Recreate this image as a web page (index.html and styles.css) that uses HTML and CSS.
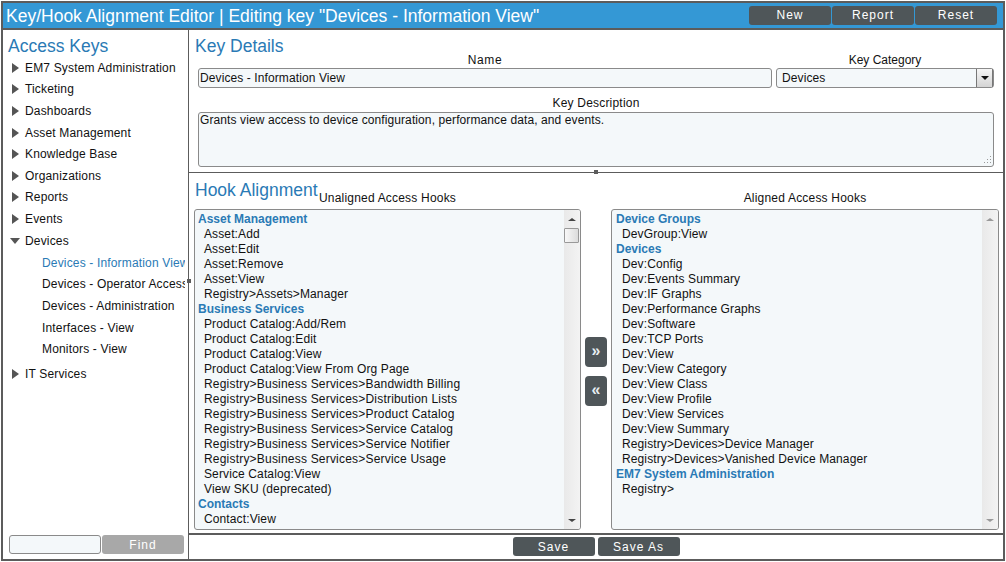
FILE: index.html
```html
<!DOCTYPE html>
<html lang="en">
<head>
<meta charset="utf-8">
<title>Key/Hook Alignment Editor</title>
<link rel="stylesheet" href="styles.css">
</head>
<body>
<div class="app">
  <header class="titlebar">
    <h1>Key/Hook Alignment Editor | Editing key "Devices - Information View"</h1>
    <div class="top-actions">
      <button class="btn top">New</button>
      <button class="btn top">Report</button>
      <button class="btn top">Reset</button>
    </div>
  </header>
  <div class="body">
    <aside class="sidebar">
      <h2 class="side-title">Access Keys</h2>
      <ul class="tree">
        <li class="node"><span class="tri"></span>EM7 System Administration</li>
        <li class="node"><span class="tri"></span>Ticketing</li>
        <li class="node"><span class="tri"></span>Dashboards</li>
        <li class="node"><span class="tri"></span>Asset Management</li>
        <li class="node"><span class="tri"></span>Knowledge Base</li>
        <li class="node"><span class="tri"></span>Organizations</li>
        <li class="node"><span class="tri"></span>Reports</li>
        <li class="node"><span class="tri"></span>Events</li>
        <li class="node expanded"><span class="tri open"></span>Devices</li>
        <li class="leaf active">Devices - Information View</li>
        <li class="leaf">Devices - Operator Access</li>
        <li class="leaf">Devices - Administration</li>
        <li class="leaf">Interfaces - View</li>
        <li class="leaf">Monitors - View</li>
        <li class="node last"><span class="tri"></span>IT Services</li>
      </ul>
      <div class="find">
        <input class="find-input" type="text" aria-label="Find">
        <button class="btn find-btn">Find</button>
      </div>
      <span class="grip side-grip"></span>
    </aside>
    <main class="main">
      <section class="details">
        <h2 class="section-title">Key Details</h2>
        <div class="detail-row">
          <div class="field name-field">
            <label class="label name-label">Name</label>
            <div class="box input">Devices - Information View</div>
          </div>
          <div class="field cat-field">
            <label class="label cat-label">Key Category</label>
            <div class="box input select">Devices<span class="drop"><i class="down black"></i></span></div>
          </div>
        </div>
        <label class="label desc-label">Key Description</label>
        <div class="box textarea">Grants view access to device configuration, performance data, and events.
          <svg class="resize" width="10" height="10" viewBox="0 0 10 10"><path d="M8 1h1v1H8zM5 4h1v1H5zM8 4h1v1H8zM2 7h1v1H2zM5 7h1v1H5zM8 7h1v1H8z" fill="#999"/></svg>
        </div>
        <span class="grip mid-grip"></span>
      </section>
      <section class="hooks">
        <h2 class="section-title hook-title">Hook Alignment</h2>
        <div class="hook-grid">
          <div class="label list-label">Unaligned Access Hooks</div>
          <div></div>
          <div class="label list-label">Aligned Access Hooks</div>
          <div class="list">
            <div class="items">
              <div class="group">Asset Management</div>
              <div class="item">Asset:Add</div>
              <div class="item">Asset:Edit</div>
              <div class="item">Asset:Remove</div>
              <div class="item">Asset:View</div>
              <div class="item">Registry&gt;Assets&gt;Manager</div>
              <div class="group">Business Services</div>
              <div class="item">Product Catalog:Add/Rem</div>
              <div class="item">Product Catalog:Edit</div>
              <div class="item">Product Catalog:View</div>
              <div class="item">Product Catalog:View From Org Page</div>
              <div class="item wide">Registry&gt;Business Services&gt;Bandwidth Billing</div>
              <div class="item wide">Registry&gt;Business Services&gt;Distribution Lists</div>
              <div class="item wide">Registry&gt;Business Services&gt;Product Catalog</div>
              <div class="item wide">Registry&gt;Business Services&gt;Service Catalog</div>
              <div class="item wide">Registry&gt;Business Services&gt;Service Notifier</div>
              <div class="item wide">Registry&gt;Business Services&gt;Service Usage</div>
              <div class="item">Service Catalog:View</div>
              <div class="item">View SKU (deprecated)</div>
              <div class="group">Contacts</div>
              <div class="item">Contact:View</div>
            </div>
            <div class="scroll">
              <i class="up dark"></i>
              <span class="thumb"></span>
              <i class="down dark push"></i>
            </div>
          </div>
          <div class="movers">
            <button class="btn move">»</button>
            <button class="btn move">«</button>
          </div>
          <div class="list">
            <div class="items right">
              <div class="group">Device Groups</div>
              <div class="item">DevGroup:View</div>
              <div class="group">Devices</div>
              <div class="item">Dev:Config</div>
              <div class="item">Dev:Events Summary</div>
              <div class="item">Dev:IF Graphs</div>
              <div class="item">Dev:Performance Graphs</div>
              <div class="item">Dev:Software</div>
              <div class="item">Dev:TCP Ports</div>
              <div class="item">Dev:View</div>
              <div class="item">Dev:View Category</div>
              <div class="item">Dev:View Class</div>
              <div class="item">Dev:View Profile</div>
              <div class="item">Dev:View Services</div>
              <div class="item">Dev:View Summary</div>
              <div class="item">Registry&gt;Devices&gt;Device Manager</div>
              <div class="item">Registry&gt;Devices&gt;Vanished Device Manager</div>
              <div class="group">EM7 System Administration</div>
              <div class="item">Registry&gt;</div>
            </div>
            <div class="scroll">
              <i class="up"></i>
              <i class="down push"></i>
            </div>
          </div>
        </div>
      </section>
      <footer class="footer">
        <button class="btn save">Save</button>
        <button class="btn save">Save As</button>
      </footer>
    </main>
  </div>
</div>
</body>
</html>
```
FILE: styles.css
```css
* { box-sizing: border-box; }
html, body { margin: 0; padding: 0; background: #fff; }
body { width: 1006px; height: 562px; overflow: hidden; font-family: "Liberation Sans", Arial, sans-serif; font-size: 12px; color: #111; }
h1, h2, ul { margin: 0; padding: 0; }
ul { list-style: none; }
button { font-family: inherit; }

.app { width: 1004px; height: 560px; margin: 1px 0 0 1px; border: 2px solid #5c5c5c; display: flex; flex-direction: column; background: #fff; }

.titlebar { height: 27px; flex: none; background: #3498d5; border-bottom: 2px solid #5c5c5c; display: flex; align-items: flex-start; justify-content: space-between; padding: 2px 6px 0 3px; }
.titlebar h1 { font-size: 17.5px; font-weight: 400; color: #fff; line-height: 22px; white-space: nowrap; }
.top-actions { display: flex; gap: 1px; margin-top: 1px; }

.btn { border: 0; border-radius: 3px; background: #4f5659; color: #fff; font-size: 12px; letter-spacing: 1px; padding: 0 0 2px; }
.btn.top { width: 82px; height: 19px; }

.body { flex: 1; display: flex; min-height: 0; }

.sidebar { position: relative; width: 186px; flex: none; border-right: 1px solid #5c5c5c; display: flex; flex-direction: column; }
.side-title { font-size: 17.5px; font-weight: 400; color: #2a7ab5; line-height: 20px; margin: 6px 0 1px 5px; }
.tree { flex: 1; overflow: hidden; letter-spacing: .16px; }
.tree li { height: 21.6px; line-height: 22px; white-space: nowrap; overflow: hidden; }
.node { display: flex; align-items: center; padding-left: 9px; }
.node.expanded { margin-bottom: .5px; }
.node.last { margin-top: 3px; }
.leaf { padding-left: 39px; width: 182px; }
.leaf.active { color: #2a7ab5; }
.tri { width: 0; height: 0; margin-right: 6px; border-left: 7px solid #555; border-top: 5px solid transparent; border-bottom: 5px solid transparent; }
.tri.open { border-left: 5px solid transparent; border-right: 5px solid transparent; border-top: 6px solid #555; border-bottom: 0; margin-left: -2px; margin-right: 5px; }

.find { display: flex; gap: 1px; padding: 0 3px 5px 6px; height: 24px; flex: none; }
.find-input { width: 92px; height: 19px; border: 1px solid #8a8a8a; border-radius: 3px; background: #f4f8fa; padding: 0; }
.find-btn { width: 82px; height: 19px; background: #a8a8a8; padding: 0; }

.grip { position: absolute; width: 4px; height: 4px; background: #5c5c5c; }
.side-grip { right: -3px; top: 249px; }
.mid-grip { left: 405px; bottom: -2px; }

.main { flex: 1; min-width: 0; display: flex; flex-direction: column; }

.details { position: relative; height: 143px; flex: none; border-bottom: 1px solid #5c5c5c; padding: 6px 9px 0 9px; }
.section-title { font-size: 17.5px; font-weight: 400; color: #2a7ab5; line-height: 20px; margin-left: -3px; }
.details .section-title { height: 21px; }
.detail-row { display: flex; gap: 4px; margin-top: -4px; }
.field { display: flex; flex-direction: column; }
.name-field { width: 574px; }
.cat-field { width: 218px; }
.label { display: block; text-align: center; line-height: 15px; height: 15px; letter-spacing: .2px; }
.name-label { letter-spacing: .6px; }
.cat-label { letter-spacing: 0; }
.box { border: 1px solid #8a8a8a; border-radius: 3px; background: #f4f8fa; line-height: 15px; letter-spacing: .1px; }
.input { height: 20px; padding: 2px 0 0 1px; }
.select { position: relative; padding-left: 5px; }
.drop { position: absolute; right: 0; top: 0; width: 17px; height: 18px; background: linear-gradient(#f6f6f6, #d4d4d4); border-left: 1px solid #777; border-right: 1px solid #777; display: flex; align-items: center; justify-content: center; }
.desc-label { margin-top: 8px; width: 796px; }
.textarea { position: relative; width: 796px; height: 55px; margin-top: 1px; padding: 0 0 0 1px; }
.resize { position: absolute; right: 1px; bottom: 1px; }

.hooks { flex: 1; min-height: 0; padding: 7px 4px 0 5px; border-bottom: 2px solid #5c5c5c; }
.hook-title { height: 1px; margin-left: 1px; }
.hook-grid { display: grid; grid-template-columns: 387px 30px 388px; grid-template-rows: 28px 321px; }
.list-label { padding-top: 10px; height: 28px; }
.list { display: flex; height: 321px; border: 1px solid #8a8a8a; border-radius: 3px; background: #f4f8fa; overflow: hidden; }
.items { flex: 1; min-width: 0; padding: 2px 0 0 3px; letter-spacing: .12px; }
.items.right { padding-left: 4px; }
.group { height: 15px; line-height: 15px; font-weight: 700; color: #2a7ab5; white-space: nowrap; letter-spacing: 0; }
.item { height: 15px; line-height: 15px; padding-left: 6px; white-space: nowrap; }
.item.wide { letter-spacing: .2px; }
.scroll { width: 16px; flex: none; background: linear-gradient(90deg, #e9e9e9, #f3f3f3); display: flex; flex-direction: column; align-items: center; padding: 8px 0 7px; }
.thumb { width: 15px; height: 15px; margin: 7px 1px 0 0; background: linear-gradient(90deg, #f8f8f8, #dcdcdc); border: 1px solid #999; border-radius: 1px; }
.push { margin-top: auto; }
.up, .down { display: block; width: 0; height: 0; border-left: 4px solid transparent; border-right: 4px solid transparent; }
.up { border-bottom: 3px solid #999; }
.down { border-top: 3px solid #999; }
.up.dark { border-bottom-color: #444; }
.down.dark { border-top-color: #444; }
.down.black { border-top: 4px solid #111; }

.movers { display: flex; flex-direction: column; align-items: center; padding-top: 128px; gap: 9px; }
.move { width: 22px; height: 30px; font-size: 16px; line-height: 26px; letter-spacing: 0; border-radius: 4px; font-weight: 700; color: #e8eef2; }

.footer { height: 24px; flex: none; display: flex; justify-content: center; gap: 3px; padding-top: 2px; }
.save { width: 82px; height: 19px; padding: 0; }
```
